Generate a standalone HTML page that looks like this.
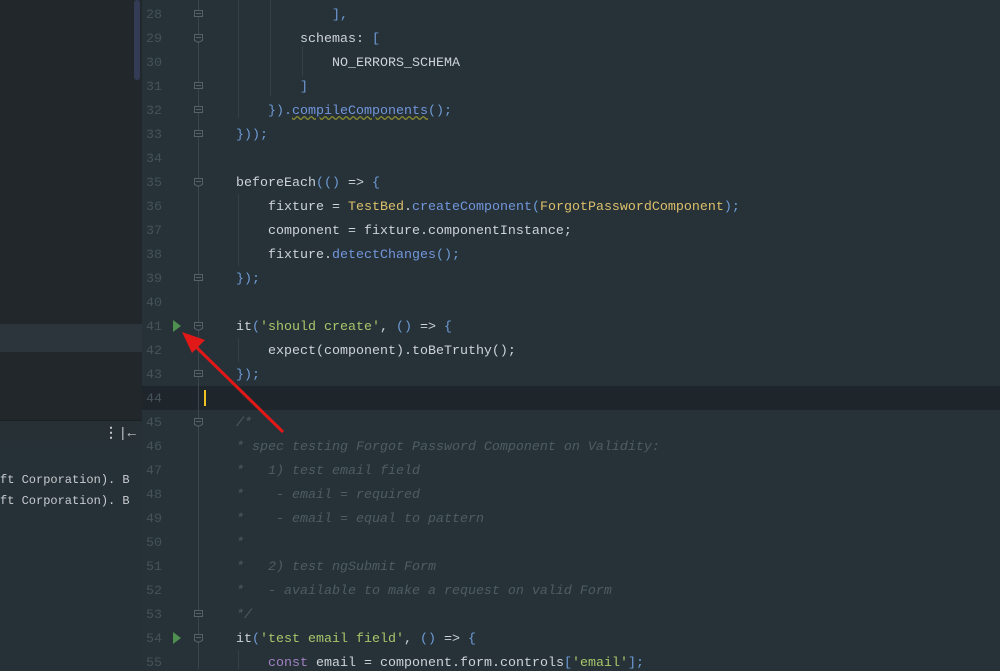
<!DOCTYPE html>
<html><head><style>
html,body{margin:0;padding:0;width:1000px;height:669px;overflow:hidden;background:#263238;}
#left{position:absolute;left:0;top:0;width:142px;height:669px;background:#232a2f;}
#ltop{position:absolute;left:0;top:0;width:142px;height:420px;background:#21272b;}
#lsel{position:absolute;left:0;top:324px;width:142px;height:28px;background:#2c353b;}
#lhdr{position:absolute;left:0;top:420px;width:142px;height:25px;background:#263035;border-top:1px solid #1b2023;border-bottom:1px solid #1b2023;color:#c0c4c8;font:14px "Liberation Sans",sans-serif;}
#lbot{position:absolute;left:0;top:446px;width:142px;height:223px;background:#263137;}
.con{position:absolute;left:0;font:12px "Liberation Mono",monospace;color:#c8ccd0;white-space:pre;}
#sb{position:absolute;left:134px;top:0;width:6px;height:80px;background:#343c55;border-radius:3px;}
#ed{position:absolute;left:142px;top:0;width:858px;height:669px;background:#263238;}
#hl{position:absolute;left:142px;top:386px;width:858px;height:24px;background:#1f262b;}
.ln{position:absolute;left:142px;width:20px;text-align:right;font:13.33px "Liberation Mono",monospace;color:#46525a;margin-top:2px;}
.code{position:absolute;left:204px;font:13.33px "Liberation Mono",monospace;color:#cdd3d8;white-space:pre;margin-top:2px;}
.p{color:#6f9bd6}.s{color:#a8c66a}.y{color:#dcbf6a}.m{color:#7396dc}.c{color:#4f5c64;font-style:italic}.k{color:#a381c4}
#fl{position:absolute;left:198px;top:0;width:1px;height:669px;background:#3a454c;}
.g{position:absolute;width:1px;background:#34404a;}
</style></head><body>
<div id="left"></div><div id="ltop"></div><div id="lsel"></div><div id="sb"></div>
<div id="lhdr"><span style="position:absolute;left:104px;top:3px;font-weight:bold">⋮</span><span style="position:absolute;left:121px;top:3px">|←</span></div>
<div id="lbot"></div>
<div class="con" style="top:473px">ft Corporation). B</div>
<div class="con" style="top:494px">ft Corporation). B</div>
<div id="ed"></div><div id="hl"></div>
<div id="fl"></div>
<div class="g" style="left:238px;top:0;height:118px"></div>
<div class="g" style="left:270px;top:0;height:96px"></div>
<div class="g" style="left:302px;top:46px;height:30px"></div>
<div class="g" style="left:238px;top:194px;height:72px"></div>
<div class="g" style="left:238px;top:338px;height:24px"></div>
<div class="g" style="left:238px;top:650px;height:19px"></div>
<svg style="position:absolute;left:0;top:0" width="1000" height="669">
<g fill="#4f8f4f"><polygon points="173,320 181,326 173,332"/><polygon points="173,632 181,638 173,644"/></g>
<g stroke="#56626a" fill="#263238" stroke-width="1">
<path d="M194.5 10.5h8v6h-8z M196 13.5h5"/>
<path d="M194.5 34.5h8v6l-4 2l-4-2z M196 37.5h5"/>
<path d="M194.5 82.5h8v6h-8z M196 85.5h5"/>
<path d="M194.5 106.5h8v6h-8z M196 109.5h5"/>
<path d="M194.5 130.5h8v6h-8z M196 133.5h5"/>
<path d="M194.5 178.5h8v6l-4 2l-4-2z M196 181.5h5"/>
<path d="M194.5 274.5h8v6h-8z M196 277.5h5"/>
<path d="M194.5 322.5h8v6l-4 2l-4-2z M196 325.5h5"/>
<path d="M194.5 370.5h8v6h-8z M196 373.5h5"/>
<path d="M194.5 418.5h8v6l-4 2l-4-2z M196 421.5h5"/>
<path d="M194.5 610.5h8v6h-8z M196 613.5h5"/>
<path d="M194.5 634.5h8v6l-4 2l-4-2z M196 637.5h5"/>
</g>
<rect x="204" y="390" width="2" height="16" fill="#f0c020"/>
<line x1="283" y1="432" x2="192" y2="343" stroke="#e01818" stroke-width="3"/>
<polygon points="182,332 205,340 192,353" fill="#e01818"/>
</svg>
<div class="ln" style="top:6px">28</div><div class="code" style="top:6px">                <span class="p">],</span></div>
<div class="ln" style="top:30px">29</div><div class="code" style="top:30px">            schemas: <span class="p">[</span></div>
<div class="ln" style="top:54px">30</div><div class="code" style="top:54px">                NO_ERRORS_SCHEMA</div>
<div class="ln" style="top:78px">31</div><div class="code" style="top:78px">            <span class="p">]</span></div>
<div class="ln" style="top:102px">32</div><div class="code" style="top:102px">        <span class="p">}).</span><span class="m" style="text-decoration:underline wavy #8a8a30">compileComponents</span><span class="p">();</span></div>
<div class="ln" style="top:126px">33</div><div class="code" style="top:126px">    <span class="p">}));</span></div>
<div class="ln" style="top:150px">34</div>
<div class="ln" style="top:174px">35</div><div class="code" style="top:174px">    beforeEach<span class="p">(()</span> =&gt; <span class="p">{</span></div>
<div class="ln" style="top:198px">36</div><div class="code" style="top:198px">        fixture = <span class="y">TestBed</span>.<span class="m">createComponent</span><span class="p">(</span><span class="y">ForgotPasswordComponent</span><span class="p">);</span></div>
<div class="ln" style="top:222px">37</div><div class="code" style="top:222px">        component = fixture.componentInstance;</div>
<div class="ln" style="top:246px">38</div><div class="code" style="top:246px">        fixture.<span class="m">detectChanges</span><span class="p">();</span></div>
<div class="ln" style="top:270px">39</div><div class="code" style="top:270px">    <span class="p">});</span></div>
<div class="ln" style="top:294px">40</div>
<div class="ln" style="top:318px">41</div><div class="code" style="top:318px">    it<span class="p">(</span><span class="s">'should create'</span>, <span class="p">()</span> =&gt; <span class="p">{</span></div>
<div class="ln" style="top:342px">42</div><div class="code" style="top:342px">        expect(component).toBeTruthy();</div>
<div class="ln" style="top:366px">43</div><div class="code" style="top:366px">    <span class="p">});</span></div>
<div class="ln" style="top:390px">44</div>
<div class="ln" style="top:414px">45</div><div class="code c" style="top:414px">    /*</div>
<div class="ln" style="top:438px">46</div><div class="code c" style="top:438px">    * spec testing Forgot Password Component on Validity:</div>
<div class="ln" style="top:462px">47</div><div class="code c" style="top:462px">    *   1) test email field</div>
<div class="ln" style="top:486px">48</div><div class="code c" style="top:486px">    *    - email = required</div>
<div class="ln" style="top:510px">49</div><div class="code c" style="top:510px">    *    - email = equal to pattern</div>
<div class="ln" style="top:534px">50</div><div class="code c" style="top:534px">    *</div>
<div class="ln" style="top:558px">51</div><div class="code c" style="top:558px">    *   2) test ngSubmit Form</div>
<div class="ln" style="top:582px">52</div><div class="code c" style="top:582px">    *   - available to make a request on valid Form</div>
<div class="ln" style="top:606px">53</div><div class="code c" style="top:606px">    */</div>
<div class="ln" style="top:630px">54</div><div class="code" style="top:630px">    it<span class="p">(</span><span class="s">'test email field'</span>, <span class="p">()</span> =&gt; <span class="p">{</span></div>
<div class="ln" style="top:654px">55</div><div class="code" style="top:654px">        <span class="k">const</span> email = component.form.controls<span class="p">[</span><span class="s">'email'</span><span class="p">];</span></div>
</body></html>
